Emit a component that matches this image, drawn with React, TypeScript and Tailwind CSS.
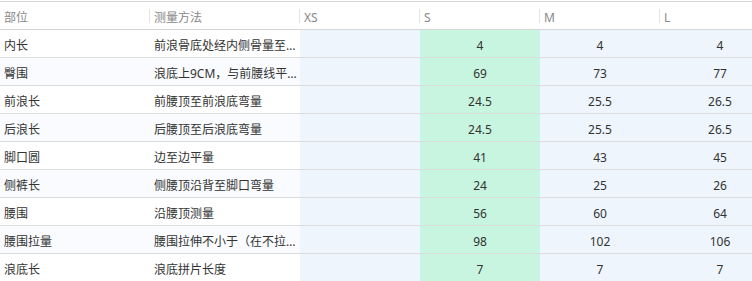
const sizes = ['XS', 'S', 'M', 'L']

const rows: { part: string; method: string; values: [string, string, string] }[] = [
  { part: '内长', method: '前浪骨底处经内侧骨量至…', values: ['4', '4', '4'] },
  { part: '臀围', method: '浪底上9CM，与前腰线平…', values: ['69', '73', '77'] },
  { part: '前浪长', method: '前腰顶至前浪底弯量', values: ['24.5', '25.5', '26.5'] },
  { part: '后浪长', method: '后腰顶至后浪底弯量', values: ['24.5', '25.5', '26.5'] },
  { part: '脚口圆', method: '边至边平量', values: ['41', '43', '45'] },
  { part: '侧裤长', method: '侧腰顶沿背至脚口弯量', values: ['24', '25', '26'] },
  { part: '腰围', method: '沿腰顶测量', values: ['56', '60', '64'] },
  { part: '腰围拉量', method: '腰围拉伸不小于（在不拉…', values: ['98', '102', '106'] },
  { part: '浪底长', method: '浪底拼片长度', values: ['7', '7', '7'] },
]

function HeaderCell({ label, width, divider = true }: { label: string; width: string; divider?: boolean }) {
  return (
    <div className={`flex ${width} shrink-0 items-center pl-1`}>
      <span className="flex-1 pt-[4px]">{label}</span>
      {divider ? <span className="h-[14px] w-px bg-[#e3e3e3]" /> : null}
    </div>
  )
}

export default function App() {
  return (
    <div
      className="w-[752px] overflow-hidden bg-white text-[12px] text-[#333]"
      style={{ fontFamily: '"Noto Sans", "Noto Sans CJK SC", sans-serif' }}
    >
      <div className="mt-px w-[780px] border-t border-[#d6d6d6]">
        {/* Header */}
        <div className="flex h-[28px] border-b border-[#d6d6d6] text-[#888]">
          <HeaderCell label="部位" width="w-[150px]" />
          <HeaderCell label="测量方法" width="w-[150px]" />
          {sizes.map((s, i) => (
            <HeaderCell key={s} label={s} width="w-[120px]" divider={i < sizes.length - 1} />
          ))}
        </div>

        {/* Body */}
        {rows.map((r, idx) => (
          <div key={r.part} className="flex h-[28px] border-b border-[#dcdcdc]">
            <div className={`flex w-[300px] shrink-0 ${idx % 2 === 1 ? 'bg-[#f9fbfe]' : 'bg-white'}`}>
              <div className="flex w-[150px] items-center whitespace-nowrap pl-1 pt-[4px]">{r.part}</div>
              <div className="flex w-[150px] items-center whitespace-nowrap pl-1 pt-[4px]">{r.method}</div>
            </div>
            <div className="w-[120px] shrink-0 bg-[#eef5fd]" />
            <div className="flex w-[120px] shrink-0 items-center justify-center bg-[#c8f5e0] pt-[4px]">{r.values[0]}</div>
            <div className="flex w-[120px] shrink-0 items-center justify-center bg-[#eef5fd] pt-[4px]">{r.values[1]}</div>
            <div className="flex w-[120px] shrink-0 items-center justify-center bg-[#eef5fd] pt-[4px]">{r.values[2]}</div>
          </div>
        ))}
      </div>
    </div>
  )
}
